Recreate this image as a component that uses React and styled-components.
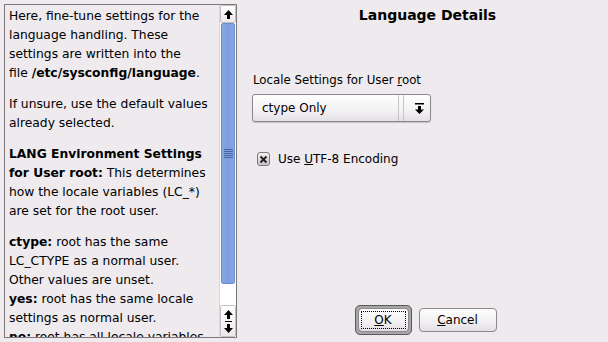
import React from 'react'
import styled, { createGlobalStyle } from 'styled-components'

const Global = createGlobalStyle`
  html, body {
    margin: 0;
    padding: 0;
    background: #eeeaee;
  }
  body {
    font-family: 'DejaVu Sans', 'Liberation Sans', sans-serif;
    font-size: 12px;
    color: #000;
  }
`

const Window = styled.div`
  width: 608px;
  height: 342px;
  display: flex;
  box-sizing: border-box;
  padding: 4px 0 4px 4px;
  background: #eeeaee;
  overflow: hidden;
`

const HelpPanel = styled.div`
  width: 233px;
  height: 334px;
  box-sizing: border-box;
  border: 1px solid #7a787a;
  display: flex;
  flex-shrink: 0;
`

const HelpText = styled.div`
  flex: 1;
  overflow: hidden;
  white-space: nowrap;
  padding: 2px 4px 0 4px;
  font-size: 12.3px;
  line-height: 19px;
  p {
    margin: 0 0 12px 0;
  }
`

const ScrollBar = styled.div`
  width: 16px;
  display: flex;
  flex-direction: column;
  border-left: 1px solid #d8d4d8;
  background: #fff;
`

const ArrowButton = styled.div`
  height: ${(p) => p.h}px;
  box-sizing: border-box;
  border: 1px solid #c4c0c4;
  border-radius: 2px;
  background: linear-gradient(#ffffff, #ebe8eb);
  display: flex;
  flex-direction: column;
  align-items: center;
  justify-content: center;
  gap: 2px;
`

const Thumb = styled.div`
  height: 261px;
  margin: 0 1px;
  box-sizing: border-box;
  border: 1px solid #6a8fd0;
  border-radius: 2px;
  background: linear-gradient(90deg, #86a7e3, #7c9ee0 50%, #86a7e3);
  display: flex;
  align-items: center;
  justify-content: center;
`

const Track = styled.div`
  flex: 1;
  background: #ffffff;
`

const Grip = styled.div`
  width: 9px;
  height: 9px;
  background: repeating-linear-gradient(#4a63a0 0 1px, transparent 1px 2px);
`

const Dash = styled.div`
  width: 7px;
  height: 1px;
  background: #000;
`

const MainPane = styled.div`
  flex: 1;
  display: flex;
  flex-direction: column;
  padding: 0 0 3px 16px;
`

const Title = styled.h1`
  margin: 0 0 0 -6px;
  font-size: 14px;
  font-weight: bold;
  text-align: center;
  line-height: 22px;
`

const Content = styled.div`
  flex: 1;
  display: flex;
  flex-direction: column;
  padding-top: 46px;
`

const FieldLabel = styled.div`
  line-height: 16px;
  margin-bottom: 6px;
  font-size: 11.8px;
`

const Combo = styled.div`
  width: 179px;
  height: 28px;
  box-sizing: border-box;
  margin-left: -1px;
  border: 1px solid #8c898c;
  border-radius: 3px;
  background: linear-gradient(#ffffff, #f3f1f3 60%, #e4e1e4);
  box-shadow: 0 1px 1px rgba(0, 0, 0, 0.18);
  display: flex;
  align-items: center;
`

const ComboText = styled.div`
  flex: 1;
  padding-left: 9px;
`

const ComboSep = styled.div`
  width: 4px;
  height: 26px;
  border-left: 1px solid #c8c5c8;
  border-right: 1px solid #c8c5c8;
  margin-right: 8px;
`

const ComboArrow = styled.div`
  width: 14px;
  display: flex;
  justify-content: center;
  margin-right: 4px;
`

const CheckRow = styled.div`
  display: flex;
  align-items: center;
  gap: 8px;
  margin-top: 30px;
  padding-left: 4px;
`

const CheckBox = styled.div`
  width: 13px;
  height: 14px;
  box-sizing: border-box;
  border: 1px solid #7c797c;
  border-radius: 3px;
  background: linear-gradient(#f2f0f2, #c9c6c9);
  display: flex;
  align-items: center;
  justify-content: center;
`

const ButtonRow = styled.div`
  display: flex;
  justify-content: center;
  gap: 7px;
  padding-right: 10px;
  align-items: center;
`

const DefaultFrame = styled.div`
  padding: 2px;
  border: 1px solid #5a585a;
  border-radius: 5px;
  background: #a8a5a8;
`

const Button = styled.button`
  width: ${(p) => p.w}px;
  height: 24px;
  box-sizing: border-box;
  border: 1px solid #8c898c;
  border-radius: 4px;
  background: linear-gradient(#ffffff, #f1eff1 60%, #e2dfe2);
  font-family: inherit;
  font-size: 12px;
  color: #000;
  padding: 2px;
  display: flex;
  align-items: stretch;
`

const FocusRing = styled.span`
  flex: 1;
  display: flex;
  align-items: center;
  justify-content: center;
  border: ${(p) => (p.focus ? '1px dotted #000' : '1px solid transparent')};
`

const Mn = styled.span`
  text-decoration: underline;
`

const UpArrow = () => (
  <svg width="9" height="9" viewBox="0 0 9 9">
    <path d="M4.5 0 L9 5 L6 5 L6 9 L3 9 L3 5 L0 5 Z" fill="#000" />
  </svg>
)

const DownArrow = () => (
  <svg width="9" height="9" viewBox="0 0 9 9">
    <path d="M4.5 9 L9 4 L6 4 L6 0 L3 0 L3 4 L0 4 Z" fill="#000" />
  </svg>
)

const ComboIcon = () => (
  <svg width="9" height="11" viewBox="0 0 9 11">
    <rect x="0" y="0" width="9" height="1.5" fill="#000" />
    <path d="M4.5 11 L9 6.5 L6 6.5 L6 3 L3 3 L3 6.5 L0 6.5 Z" fill="#000" />
  </svg>
)

const CrossMark = () => (
  <svg width="9" height="9" viewBox="0 0 9 9">
    <path d="M1.5 1.5 L7.5 7.5 M7.5 1.5 L1.5 7.5" stroke="#222" strokeWidth="2" />
  </svg>
)

const App = () => {
  return (
    <>
      <Global />
      <Window>
        <HelpPanel>
          <HelpText>
            <p>
              Here, fine-tune settings for the
              <br />
              language handling. These
              <br />
              settings are written into the
              <br />
              file <b>/etc/sysconfig/language</b>.
            </p>
            <p>
              If unsure, use the default values
              <br />
              already selected.
            </p>
            <p>
              <b>LANG Environment Settings</b>
              <br />
              <b>for User root:</b> This determines
              <br />
              how the locale variables (LC_*)
              <br />
              are set for the root user.
            </p>
            <p>
              <b>ctype:</b> root has the same
              <br />
              LC_CTYPE as a normal user.
              <br />
              Other values are unset.
              <br />
              <b>yes:</b> root has the same locale
              <br />
              settings as normal user.
              <br />
              <b>no:</b> root has all locale variables
            </p>
          </HelpText>
          <ScrollBar>
            <ArrowButton h={18}>
              <UpArrow />
            </ArrowButton>
            <Thumb>
              <Grip />
            </Thumb>
            <Track />
            <ArrowButton h={32}>
              <UpArrow />
              <Dash />
              <DownArrow />
            </ArrowButton>
          </ScrollBar>
        </HelpPanel>
        <MainPane>
          <Title>Language Details</Title>
          <Content>
            <FieldLabel>
              Locale Settings for User <Mn>r</Mn>oot
            </FieldLabel>
            <Combo>
              <ComboText>ctype Only</ComboText>
              <ComboSep />
              <ComboArrow>
                <ComboIcon />
              </ComboArrow>
            </Combo>
            <CheckRow>
              <CheckBox>
                <CrossMark />
              </CheckBox>
              <span>
                Use <Mn>U</Mn>TF-8 Encoding
              </span>
            </CheckRow>
          </Content>
          <ButtonRow>
            <DefaultFrame>
              <Button w={51}>
                <FocusRing focus>
                  <span>
                    <Mn>O</Mn>K
                  </span>
                </FocusRing>
              </Button>
            </DefaultFrame>
            <Button w={78}>
              <FocusRing>
                <span>
                  <Mn>C</Mn>ancel
                </span>
              </FocusRing>
            </Button>
          </ButtonRow>
        </MainPane>
      </Window>
    </>
  )
}

export default App
